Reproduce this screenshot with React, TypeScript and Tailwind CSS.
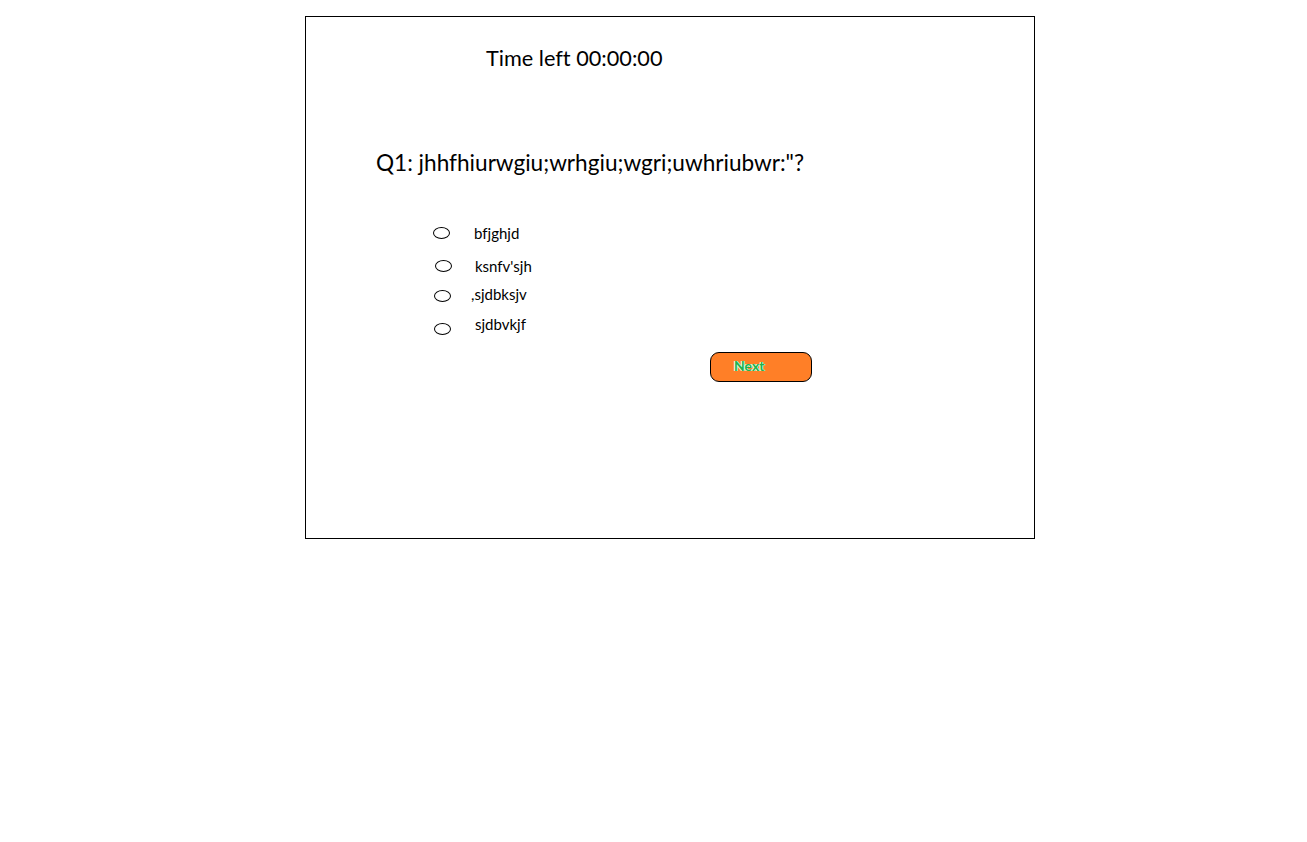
import { useState } from "react";

const options = [
	{ label: "bfjghjd", radioX: "ml-[127px]", radioY: "mt-[4px]", textGap: "ml-[24px]", top: "mt-[47px]" },
	{ label: "ksnfv'sjh", radioX: "ml-[129px]", radioY: "mt-[4px]", textGap: "ml-[23px]", top: "mt-[13px]" },
	{ label: ",sjdbksjv", radioX: "ml-[128px]", radioY: "mt-[6px]", textGap: "ml-[20px]", top: "mt-[8px]" },
	{ label: "sjdbvkjf", radioX: "ml-[128px]", radioY: "mt-[9px]", textGap: "ml-[24px]", top: "mt-[10px]" },
];

export default function App() {
	const [picked, setPicked] = useState<number | null>(null);

	return (
		<div
			className="w-[1307px] h-[842px] bg-white [font-variant-ligatures:none]"
			style={{ fontFamily: "Lato, 'Open Sans', sans-serif" }}
		>
			<div className="ml-[305px] pt-[16px]">
				<div className="w-[730px] h-[523px] border border-black text-black">
					<div className="ml-[180px] mt-[28px] text-[21.7px] leading-[26px]">Time left 00:00:00</div>

					<div className="ml-[70px] mt-[79px] text-[22.6px] leading-[26px]">
						Q1: jhhfhiurwgiu;wrhgiu;wgri;uwhriubwr:"?
					</div>

					<div className="flex flex-col">
						{options.map((o, i) => (
							<label key={o.label} className={`flex items-start h-[20px] cursor-pointer ${o.top}`}>
								<span
									onClick={() => setPicked(i)}
									className={`${o.radioX} ${o.radioY} w-[17px] h-[12px] rounded-[50%] border border-black ${picked === i ? "bg-black" : "bg-white"}`}
								/>
								<span className={`${o.textGap} text-[15px] leading-[20px]`}>{o.label}</span>
							</label>
						))}
					</div>

					<div className="ml-[404px] mt-[18px]">
						<button
							type="button"
							className="w-[102px] h-[30px] bg-[#ff7f27] border border-black rounded-[9px] text-left pl-[23px] pb-[4px] text-[14px] font-bold text-[#22b14c]"
							style={{ textShadow: "1px 0 0 #ddffe8, -1px 0 0 #ddffe8" }}
						>
							Next
						</button>
					</div>
				</div>
			</div>
		</div>
	);
}
